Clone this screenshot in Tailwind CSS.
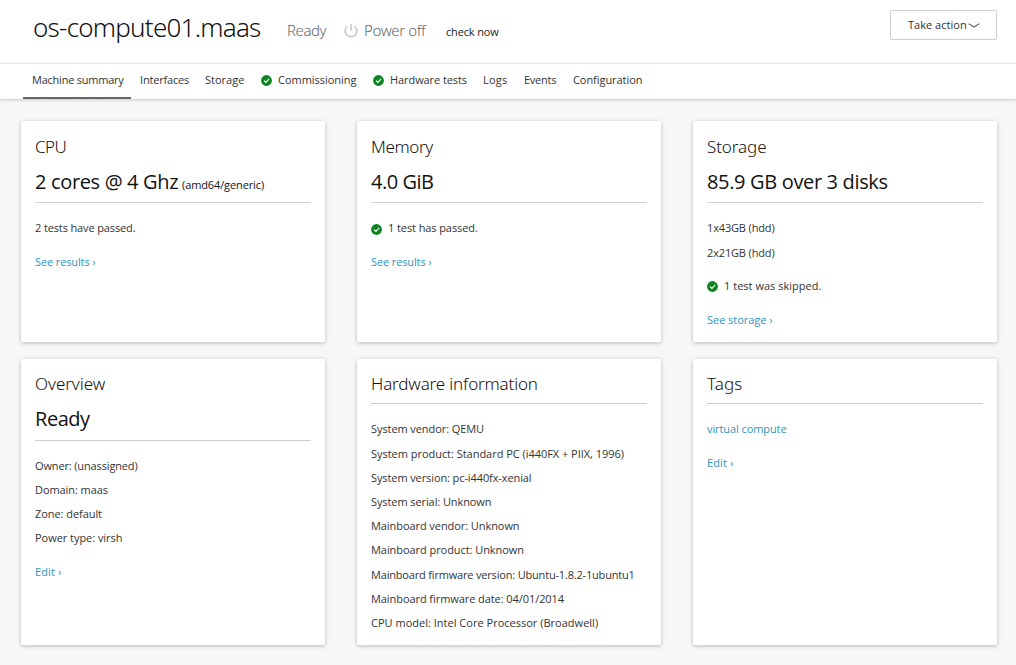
<!DOCTYPE html>
<html lang="en">
<head>
<meta charset="utf-8">
<title>os-compute01.maas</title>
<script src="https://cdn.jsdelivr.net/npm/@tailwindcss/browser@4"></script>
</head>
<body class="h-[665px] overflow-hidden bg-[#f7f7f7] font-['Open_Sans','Noto_Sans',sans-serif] text-[11px] leading-[24.2px] text-[#333] whitespace-nowrap">
<svg class="hidden">
  <symbol id="ok" viewBox="0 0 11 11"><circle cx="5.5" cy="5.5" r="5.4" fill="#0e8420"/><path d="M3 5.6l1.9 1.8L8.2 3.9" fill="none" stroke="#fff" stroke-width="1.2"/></symbol>
</svg>

<header class="flex h-[63px] items-start bg-white pl-[33px] pr-[19px] shadow-[0_0_3px_rgba(0,0,0,0.25)]">
  <h1 class="mt-[8px] w-[254px] font-['Noto_Sans',sans-serif] text-[26px] leading-[38px] font-light tracking-[-0.76px] text-[#111]">os-compute01.maas</h1>
  <span class="mt-[18px] w-[57px] font-['Noto_Sans',sans-serif] text-[15px] font-light tracking-[-0.45px] text-[#666]">Ready</span>
  <svg class="mt-[24px] mr-[6px] size-[14px]" viewBox="0 0 14 14" fill="none" stroke="#ccc" stroke-width="1.8"><path d="M3.4 2.4a5.8 5.8 0 1 0 7.2 0M7 0v6.5"/></svg>
  <span class="mt-[18px] w-[82px] font-['Noto_Sans',sans-serif] text-[15px] font-light tracking-[-0.36px] text-[#666]">Power off</span>
  <a class="mt-[20px] text-[#222] tracking-[-0.15px]">check now</a>
  <button class="mt-[10px] ml-auto flex h-[30px] w-[107px] items-center rounded-[2px] border border-[#cdcdcd] pl-[17px] tracking-[0.02px]">Take action<svg class="ml-[1px] h-[5px] w-[12px]" viewBox="0 0 12 5" fill="none" stroke="#666" stroke-width="1.2"><path d="M.5.8C3 1.6 4.5 3.8 6 3.8S9 1.6 11.5.8"/></svg></button>
</header>

<nav class="relative flex h-[36px] items-start bg-white pl-[23px] shadow-[0_1px_3px_rgba(0,0,0,0.2)] border-t border-[#e8e8e8]">
  <a class="h-[35px] w-[108px] border-b-2 border-[#666] pt-[4px] pl-[9px] tracking-[-0.23px]">Machine summary</a>
  <a class="w-[65px] pt-[4px] pl-[9px] tracking-[-0.19px]">Interfaces</a>
  <a class="w-[65px] pt-[4px] pl-[9px] tracking-[0px]">Storage</a>
  <a class="flex w-[112px] items-start pt-[4px] tracking-[-0.03px]"><svg class="mt-[7px] mr-[6px] size-[11px]"><use href="#ok"/></svg>Commissioning</a>
  <a class="flex w-[110px] items-start pt-[4px] tracking-[-0.08px]"><svg class="mt-[7px] mr-[6px] size-[11px]"><use href="#ok"/></svg>Hardware tests</a>
  <a class="w-[41px] pt-[4px] tracking-[0.2px]">Logs</a>
  <a class="w-[49px] pt-[4px] tracking-[-0.25px]">Events</a>
  <a class="pt-[4px] tracking-[-0.06px]">Configuration</a>
</nav>

<main class="grid grid-cols-[304px_304px_304px] grid-rows-[221px_286px] gap-x-[32px] gap-y-[17px] pt-[22px] pl-[21px]">
  <section class="rounded-[2px] bg-white px-[14px] pt-[14px] shadow-[0_1px_4px_rgba(0,0,0,0.25)]">
    <h2 class="font-['Noto_Sans',sans-serif] text-[17px] leading-[24px] font-light tracking-[-0.5px] text-[#111]">CPU</h2>
    <p class="mt-[9px] h-[35px] border-b border-[#cdcdcd] text-[20px] leading-[27px] tracking-[-0.34px] text-[#111]">2 cores @ 4 Ghz <span class="-ml-[1px] text-[11px] tracking-[-0.12px]">(amd64/generic)</span></p>
    <p class="mt-[13px] tracking-[-0.13px]">2 tests have passed.</p>
    <a class="mt-[9.6px] block tracking-[-0.12px] text-[#2e96be]">See results ›</a>
  </section>

  <section class="rounded-[2px] bg-white px-[14px] pt-[14px] shadow-[0_1px_4px_rgba(0,0,0,0.25)]">
    <h2 class="font-['Noto_Sans',sans-serif] text-[17px] leading-[24px] font-light tracking-[-0.37px] text-[#111]">Memory</h2>
    <p class="mt-[9px] h-[35px] border-b border-[#cdcdcd] text-[20px] leading-[27px] tracking-[-0.47px] text-[#111]">4.0 GiB</p>
    <p class="mt-[13px] flex items-center tracking-[-0.09px]"><svg class="mt-[2px] mr-[6px] size-[11px]"><use href="#ok"/></svg>1 test has passed.</p>
    <a class="mt-[9.6px] block tracking-[-0.12px] text-[#2e96be]">See results ›</a>
  </section>

  <section class="rounded-[2px] bg-white px-[14px] pt-[14px] shadow-[0_1px_4px_rgba(0,0,0,0.25)]">
    <h2 class="font-['Noto_Sans',sans-serif] text-[17px] leading-[24px] font-light tracking-[-0.1px] text-[#111]">Storage</h2>
    <p class="mt-[9px] h-[35px] border-b border-[#cdcdcd] text-[20px] leading-[27px] tracking-[-0.34px] text-[#111]">85.9 GB over 3 disks</p>
    <p class="mt-[13px] tracking-[-0.15px]">1x43GB (hdd)</p>
    <p class="mt-[0.5px] tracking-[-0.15px]">2x21GB (hdd)</p>
    <p class="mt-[9.1px] flex items-center tracking-[0.02px]"><svg class="mr-[6px] size-[11px]"><use href="#ok"/></svg>1 test was skipped.</p>
    <a class="mt-[9.6px] block tracking-[-0.04px] text-[#2e96be]">See storage ›</a>
  </section>

  <section class="rounded-[2px] bg-white px-[14px] pt-[13px] shadow-[0_1px_4px_rgba(0,0,0,0.25)]">
    <h2 class="font-['Noto_Sans',sans-serif] text-[17px] leading-[24px] font-light tracking-[-0.06px] text-[#111]">Overview</h2>
    <p class="mt-[9px] h-[36px] border-b border-[#cdcdcd] text-[20px] leading-[27px] tracking-[-0.45px] text-[#111]">Ready</p>
    <p class="mt-[12.8px] tracking-[-0.14px]">Owner: (unassigned)</p>
    <p class="tracking-[-0.08px]">Domain: maas</p>
    <p class="tracking-[-0.06px]">Zone: default</p>
    <p class="tracking-[-0.04px]">Power type: virsh</p>
    <a class="mt-[9.8px] block tracking-[0.12px] text-[#2e96be]">Edit ›</a>
  </section>

  <section class="rounded-[2px] bg-white px-[14px] pt-[13px] shadow-[0_1px_4px_rgba(0,0,0,0.25)]">
    <h2 class="h-[32px] border-b border-[#cdcdcd] font-['Noto_Sans',sans-serif] text-[17px] leading-[24px] font-light tracking-[-0.16px] text-[#111]">Hardware information</h2>
    <p class="mt-[13.3px] tracking-[-0.08px]">System vendor: QEMU</p>
    <p class="tracking-[-0.03px]">System product: Standard PC (i440FX + PIIX, 1996)</p>
    <p class="tracking-[-0.1px]">System version: pc-i440fx-xenial</p>
    <p class="tracking-[-0.09px]">System serial: Unknown</p>
    <p class="tracking-[-0.07px]">Mainboard vendor: Unknown</p>
    <p class="tracking-[-0.06px]">Mainboard product: Unknown</p>
    <p class="tracking-[-0.18px]">Mainboard firmware version: Ubuntu-1.8.2-1ubuntu1</p>
    <p class="tracking-[-0.07px]">Mainboard firmware date: 04/01/2014</p>
    <p class="tracking-[0.01px]">CPU model: Intel Core Processor (Broadwell)</p>
  </section>

  <section class="rounded-[2px] bg-white px-[14px] pt-[13px] shadow-[0_1px_4px_rgba(0,0,0,0.25)]">
    <h2 class="h-[32px] border-b border-[#cdcdcd] font-['Noto_Sans',sans-serif] text-[17px] leading-[24px] font-light tracking-[0.1px] text-[#111]">Tags</h2>
    <a class="mt-[13.3px] block tracking-[-0.09px] text-[#2e96be]">virtual compute</a>
    <a class="mt-[9.6px] block tracking-[0.12px] text-[#2e96be]">Edit ›</a>
  </section>
</main>
</body>
</html>
